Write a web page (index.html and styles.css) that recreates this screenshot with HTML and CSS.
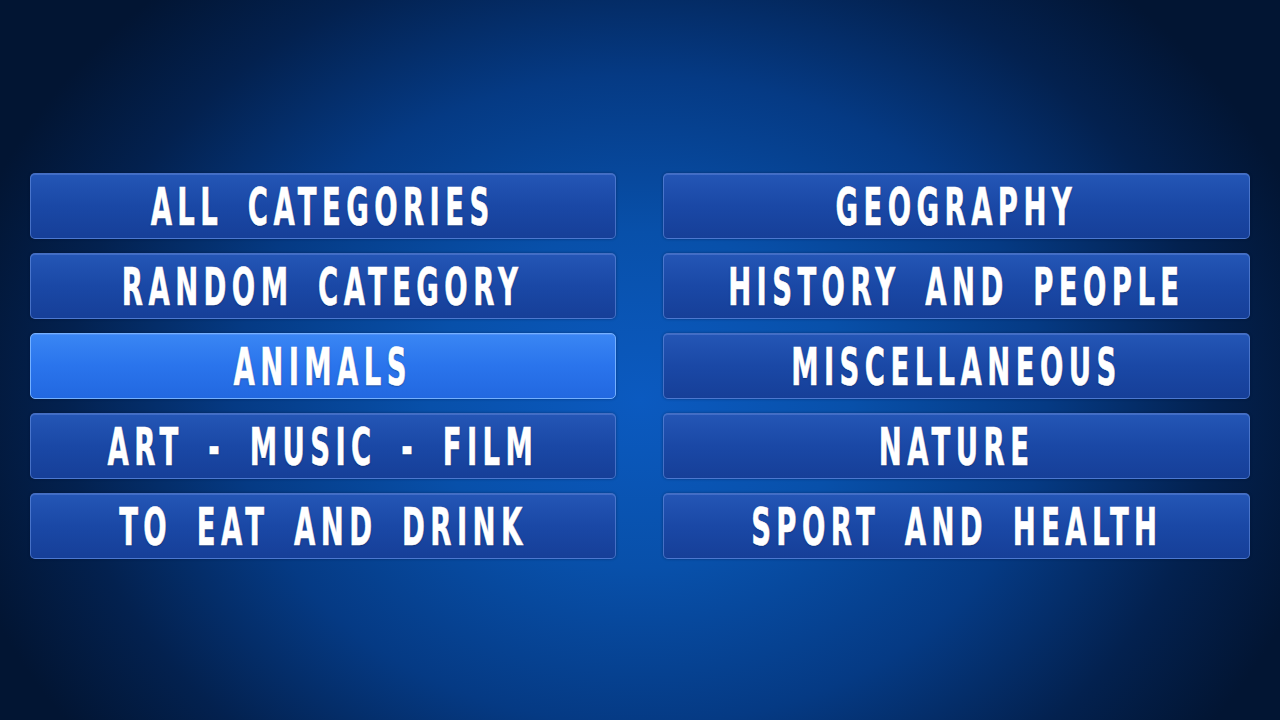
FILE: index.html
```html
<!DOCTYPE html>
<html>
<head>
<meta charset="utf-8">
<link rel="stylesheet" href="styles.css">
</head>
<body>
<main class="screen">
  <div class="grid">
    <div class="btn"><span class="label">ALL CATEGORIES</span></div>
    <div class="btn"><span class="label">GEOGRAPHY</span></div>
    <div class="btn"><span class="label">RANDOM CATEGORY</span></div>
    <div class="btn"><span class="label">HISTORY AND PEOPLE</span></div>
    <div class="btn active"><span class="label">ANIMALS</span></div>
    <div class="btn"><span class="label">MISCELLANEOUS</span></div>
    <div class="btn"><span class="label">ART - MUSIC - FILM</span></div>
    <div class="btn"><span class="label">NATURE</span></div>
    <div class="btn"><span class="label">TO EAT AND DRINK</span></div>
    <div class="btn"><span class="label">SPORT AND HEALTH</span></div>
  </div>
</main>
</body>
</html>
```
FILE: styles.css
```css
html, body {
  margin: 0;
  padding: 0;
  width: 1280px;
  height: 720px;
  overflow: hidden;
}
.screen {
  width: 1280px;
  height: 720px;
  background:
    radial-gradient(ellipse 700px 560px at 640px 400px, #0b5ac0 0%, #0850aa 30%, #053a84 58%, #03214f 82%, #021533 100%);
  background-color: #021533;
  padding-top: 173px;
  box-sizing: border-box;
}
.grid {
  margin-left: 30px;
  width: 1220px;
  display: grid;
  grid-template-columns: 586px 587px;
  column-gap: 47px;
  row-gap: 14px;
}
.btn {
  height: 66px;
  box-sizing: border-box;
  border: 1px solid rgba(110, 150, 230, 0.55);
  border-radius: 5px;
  background: linear-gradient(180deg, #2456b6 0%, #1a48a6 50%, #163f98 100%);
  box-shadow: inset 0 1px 0 rgba(150, 185, 255, 0.25), 0 0 3px rgba(0, 10, 40, 0.4);
  display: flex;
  align-items: center;
  justify-content: center;
  overflow: hidden;
}
.label {
  display: inline-block;
  white-space: nowrap;
  color: #ffffff;
  font-family: "DejaVu Sans Condensed", "DejaVu Sans", sans-serif;
  font-stretch: condensed;
  font-weight: bold;
  font-size: 51px;
  line-height: 1;
  letter-spacing: 9px;
  word-spacing: 16px;
  transform: scaleX(0.6);
  text-shadow: 0 1px 2px rgba(0, 20, 60, 0.5);
  padding-top: 2px;
  -webkit-text-stroke: 0.6px #ffffff;
}
.btn.active {
  background: linear-gradient(180deg, #3a86f4 0%, #2a74ec 50%, #2268e0 100%);
  border: 1px solid #74b0ff;
}
```
